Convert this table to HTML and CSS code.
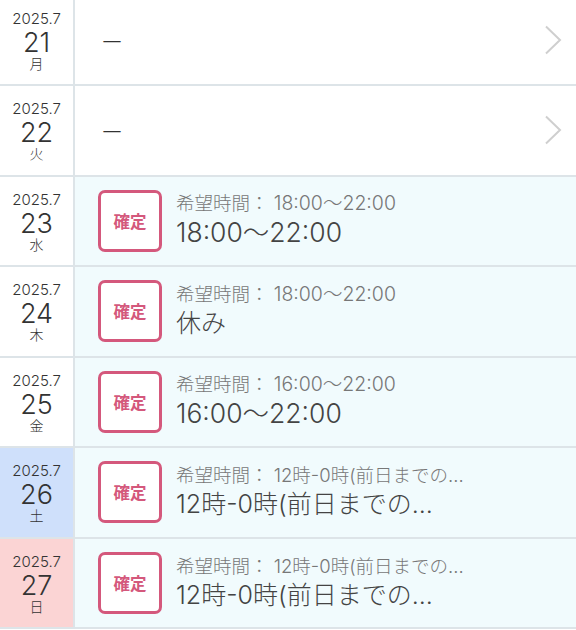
FILE: index.html
```html
<!DOCTYPE html>
<html lang="ja">
<head>
<meta charset="utf-8">
<link rel="stylesheet" href="styles.css">
</head>
<body>
<div class="list">
  <div class="row first">
    <div class="date"><div class="ym">2025.7</div><div class="day">21</div><div class="wd">月</div></div>
    <div class="content empty"><span class="dash">ー</span>
      <svg class="chev" width="18" height="30" viewBox="0 0 18 30"><path d="M2 1.5 L16 15 L2 28.5" fill="none" stroke="#cfcfcf" stroke-width="2"/></svg>
    </div>
  </div>
  <div class="row">
    <div class="date"><div class="ym">2025.7</div><div class="day">22</div><div class="wd">火</div></div>
    <div class="content empty"><span class="dash">ー</span>
      <svg class="chev" width="18" height="30" viewBox="0 0 18 30"><path d="M2 1.5 L16 15 L2 28.5" fill="none" stroke="#cfcfcf" stroke-width="2"/></svg>
    </div>
  </div>
  <div class="row">
    <div class="date"><div class="ym">2025.7</div><div class="day">23</div><div class="wd">水</div></div>
    <div class="content filled"><div class="badge">確定</div><div class="info"><div class="req">希望時間： <span class="num">18:00〜22:00</span></div><div class="main"><span class="num">18:00〜22:00</span></div></div></div>
  </div>
  <div class="row">
    <div class="date"><div class="ym">2025.7</div><div class="day">24</div><div class="wd">木</div></div>
    <div class="content filled"><div class="badge">確定</div><div class="info"><div class="req">希望時間： <span class="num">18:00〜22:00</span></div><div class="main">休み</div></div></div>
  </div>
  <div class="row">
    <div class="date"><div class="ym">2025.7</div><div class="day">25</div><div class="wd">金</div></div>
    <div class="content filled"><div class="badge">確定</div><div class="info"><div class="req">希望時間： <span class="num">16:00〜22:00</span></div><div class="main"><span class="num">16:00〜22:00</span></div></div></div>
  </div>
  <div class="row">
    <div class="date sat"><div class="ym">2025.7</div><div class="day">26</div><div class="wd">土</div></div>
    <div class="content filled"><div class="badge">確定</div><div class="info"><div class="req">希望時間： 12時-0時(前日までの...</div><div class="main">12時-0時(前日までの...</div></div></div>
  </div>
  <div class="row">
    <div class="date sun"><div class="ym">2025.7</div><div class="day">27</div><div class="wd">日</div></div>
    <div class="content filled"><div class="badge">確定</div><div class="info"><div class="req">希望時間： 12時-0時(前日までの...</div><div class="main">12時-0時(前日までの...</div></div></div>
  </div>
</div>
</body>
</html>
```

FILE: styles.css
```css
html, body {
  margin: 0;
  padding: 0;
  background: #ffffff;
}
body {
  font-family: "Inter", "Noto Sans CJK JP", "Noto Sans", sans-serif;
  color: #333;
  overflow: hidden;
}
.list {
  display: flex;
  flex-direction: column;
  margin-top: -4.5px;
}
.row {
  display: flex;
  height: 90.5px;
  box-sizing: border-box;
  border-bottom: 2px solid #dde4e8;
}
.date {
  width: 73px;
  flex: none;
  border-right: 2px solid #dde4e8;
  display: flex;
  flex-direction: column;
  align-items: center;
  justify-content: center;
  background: #fff;
  color: #333;
  font-weight: 300;
}
.date.sat { background: #cfe0fb; }
.date.sun { background: #fbd4d4; }
.ym {
  font-size: 15px;
  line-height: 21px;
}
.day {
  font-size: 27px;
  line-height: 27px;
}
.wd {
  font-size: 14px;
  line-height: 16px;
}
.content {
  flex: 1;
  display: flex;
  align-items: center;
  padding-left: 23px;
  min-width: 0;
}
.content.empty {
  background: #fff;
  justify-content: space-between;
  padding-right: 14px;
}
.dash {
  font-size: 22px;
  color: #333;
  padding-left: 3px;
  font-weight: 300;
}
.content.filled {
  background: #f1fbfd;
  gap: 14px;
}
.badge {
  width: 64px;
  height: 62px;
  box-sizing: border-box;
  border: 3.5px solid #d4587c;
  border-radius: 7px;
  background: #fff;
  color: #d4587c;
  font-weight: bold;
  font-size: 16.5px;
  display: flex;
  align-items: center;
  justify-content: center;
  flex: none;
}
.info {
  display: flex;
  flex-direction: column;
  min-width: 0;
}
.req {
  font-size: 18.5px;
  line-height: 24px;
  color: #777;
  white-space: nowrap;
  font-weight: 300;
}
.req .num {
  font-size: 19.5px;
}
.main {
  font-size: 25px;
  line-height: 34px;
  color: #444;
  white-space: nowrap;
  font-weight: 300;
}
.main .num {
  font-size: 26.5px;
}
```
